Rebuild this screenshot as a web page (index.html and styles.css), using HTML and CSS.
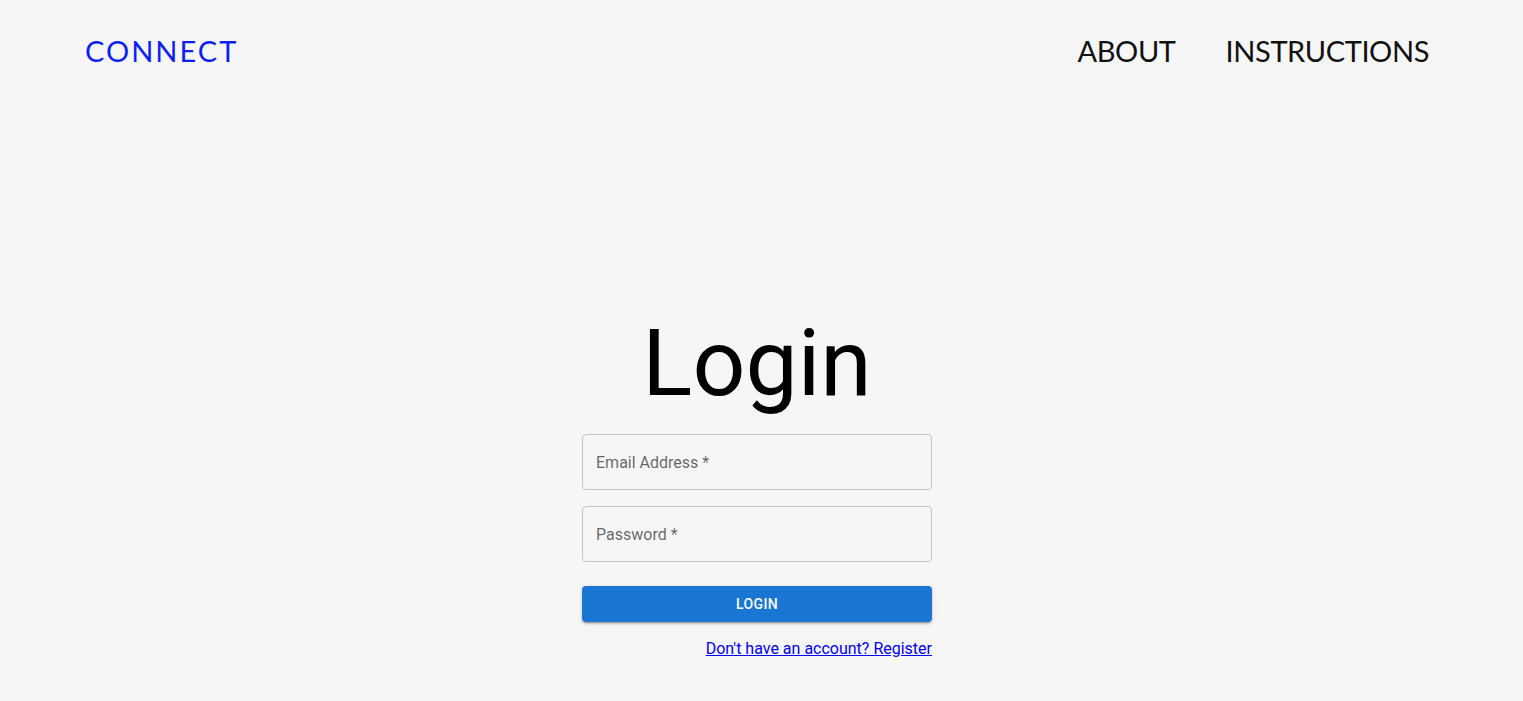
FILE: index.html
```html
<!DOCTYPE html>
<html>
<head>
<meta charset="utf-8">
<link rel="stylesheet" href="styles.css">
</head>
<body>
<header class="topbar">
  <a class="brand" href="#">CONNECT</a>
  <nav class="nav">
    <a href="#" class="nav-link">ABOUT</a>
    <a href="#" class="nav-link">INSTRUCTIONS</a>
  </nav>
</header>
<main class="main">
  <form class="login-form">
    <h1 class="title">Login</h1>
    <div class="field"><span class="label">Email Address *</span></div>
    <div class="field"><span class="label">Password *</span></div>
    <button type="button" class="btn">LOGIN</button>
    <div class="link-row"><a href="#" class="register">Don't have an account? Register</a></div>
  </form>
</main>
</body>
</html>
```
FILE: styles.css
```css
html, body {
  margin: 0;
  padding: 0;
  background: #f6f6f6;
}
body {
  font-family: Roboto, "Liberation Sans", sans-serif;
  height: 701px;
  overflow: hidden;
}
.topbar {
  display: flex;
  justify-content: space-between;
  align-items: center;
  padding: 31px 94px 0 85px;
  height: 38px;
}
.brand, .nav-link {
  font-family: Lato, "Open Sans", sans-serif;
  font-weight: 400;
  font-size: 29px;
  text-decoration: none;
}
.brand { color: #0d1ff5; letter-spacing: 2px; }
.nav { display: flex; gap: 50px; }
.nav-link { color: #111; letter-spacing: -0.4px; }
.main {
  display: flex;
  justify-content: center;
  padding-right: 9px;
  padding-top: 241px;
}
.login-form {
  width: 350px;
  display: flex;
  flex-direction: column;
}
.title {
  margin: 0 0 16px;
  font-weight: 400;
  font-size: 93px;
  line-height: 108px;
  text-align: center;
  color: #000;
}
.field {
  height: 54px;
  border: 1px solid #c4c4c4;
  border-radius: 4px;
  display: flex;
  align-items: center;
  padding: 0 13px;
  margin-bottom: 16px;
}
.label {
  font-size: 16px;
  color: rgba(0,0,0,0.6);
}
.btn {
  margin-top: 8px;
  height: 36px;
  border: none;
  border-radius: 4px;
  background: #1976d2;
  color: #fff;
  font-family: Roboto, sans-serif;
  font-weight: 500;
  font-size: 14px;
  letter-spacing: 0.4px;
  box-shadow: 0 3px 1px -2px rgba(0,0,0,0.2), 0 2px 2px 0 rgba(0,0,0,0.14), 0 1px 5px 0 rgba(0,0,0,0.12);
}
.link-row {
  display: flex;
  justify-content: flex-end;
  margin-top: 17px;
}
.register {
  color: #0000ee;
  font-size: 16px;
}
```
